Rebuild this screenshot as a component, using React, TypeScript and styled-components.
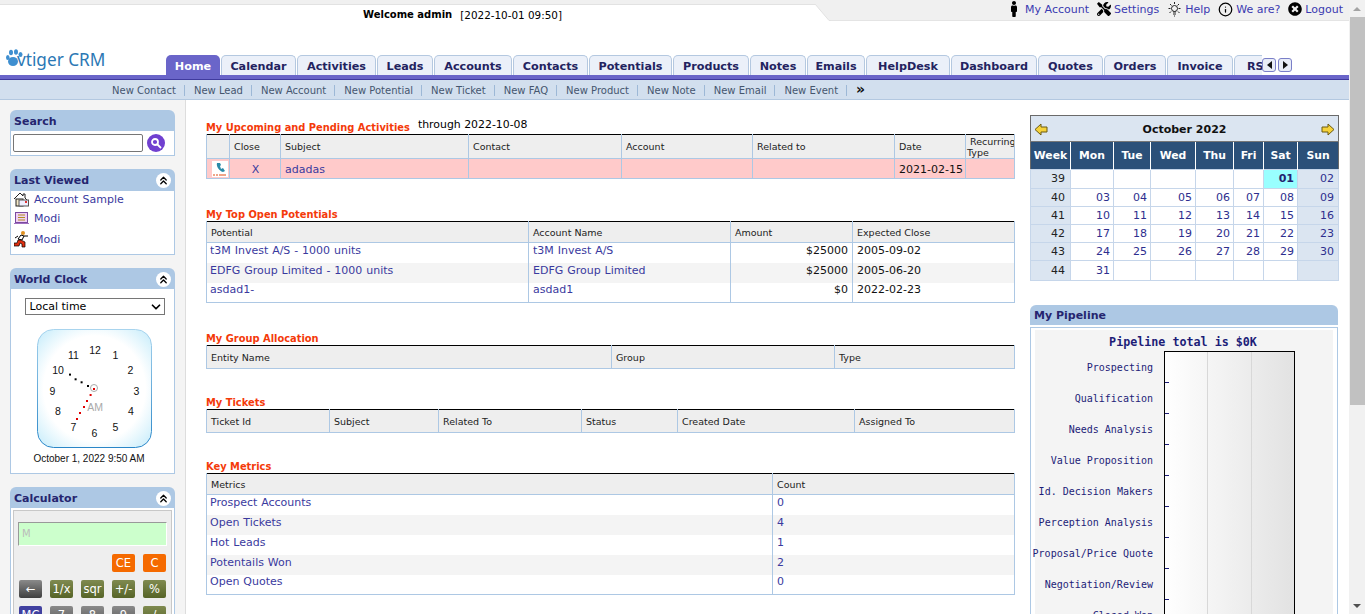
import React from "react";
import styled, { createGlobalStyle } from "styled-components";
import { FaMale, FaTools, FaTimesCircle } from "react-icons/fa";
import { Info, ChevronsUp, ChevronDown } from "lucide-react";

const Global = createGlobalStyle`
  html, body { margin: 0; padding: 0; height: 614px; overflow: hidden; background: #fff; }
  body { font-family: "DejaVu Sans", Verdana, sans-serif; font-size: 11px; }
  a { color: #3a3a9e; text-decoration: none; }
`;

const Shell = styled.div`display: flex; width: 1365px; height: 614px; overflow: hidden;`;
const Page = styled.div`width: 1349px; height: 614px; display: flex; flex-direction: column; overflow: hidden;`;
const Scrollbar = styled.div`width: 16px; height: 614px; background: #f1f1f1; display: flex; flex-direction: column; align-items: center; justify-content: space-between;`;
const ScrollEnd = styled.div`height: 17px; width: 16px; display: flex; align-items: center; justify-content: center; flex: none;`;
const ScrollThumb = styled.div`width: 15px; margin-left: 1px; height: 388px; background: #c1c1c1; flex: none;`;
const ScrollRest = styled.div`flex: 1;`;
const ScrollArrow = styled.div<{ $up?: boolean }>`
  width: 0; height: 0; border-left: 4px solid transparent; border-right: 4px solid transparent;
  ${(p) => (p.$up ? "border-bottom: 4px solid #a3a3a3;" : "border-top: 4px solid #505050;")}
`;

const TopStrip = styled.div`display: flex; height: 21px; flex: none;`;
const TopLeft = styled.div`
  width: 815px; height: 21px; border-top: 4px solid #f0f0f0; box-shadow: inset 0 1px 0 #e2e2e2; box-sizing: border-box;
  padding: 5px 0 0 363px; display: flex; gap: 8px; white-space: nowrap; font-size: 10px; line-height: 12px; color: #000;
`;
const WelcomeName = styled.b`font-weight: 700;`;
const WelcomeDate = styled.span`font-size: 10.4px;`;
const Notch = styled.svg`width: 16px; height: 21px; flex: none; display: block;`;
const TopRight = styled.div`
  flex: 1; background: #f0f0f0; border-bottom: 1px solid #e4e4e4; display: flex; justify-content: flex-end; align-items: center;
  padding: 0 6px 2px 0; gap: 8px; font-size: 11px; box-sizing: border-box;
`;
const TopLink = styled.a`display: flex; align-items: center; gap: 3px; color: #3a3ab0; white-space: nowrap;`;

const LogoRow = styled.div`height: 54px; display: flex; align-items: flex-end; flex: none;`;
const Logo = styled.div`width: 166px; height: 54px; display: flex; align-items: flex-start; padding: 28px 0 0 6px; box-sizing: border-box; flex: none;`;
const LogoText = styled.span`font-family: "Noto Sans", "Liberation Sans", sans-serif; font-size: 17.2px; line-height: 22px; color: #2b78b5; margin-left: -7px;`;
const Tabs = styled.div`display: flex; width: 1096px; overflow: hidden; gap: 1px; align-items: flex-end; flex: none;`;
const Tab = styled.div<{ $w: number; $active?: boolean }>`
  width: ${(p) => p.$w}px; height: 20px; box-sizing: border-box; flex: none; border-radius: 5px 5px 0 0;
  text-align: center; font-weight: 700; font-size: 11.2px; line-height: 23px; white-space: nowrap; overflow: hidden;
  ${(p) => (p.$active
    ? "background:#6a65c9;color:#fff;"
    : "background:#ebf0f9;color:#23235f;border:1px solid #b4c8e0;border-bottom:0;line-height:21px;")}
`;
const TabArrows = styled.div`display: flex; gap: 2px; height: 20px; align-items: center;`;
const TabArrow = styled.div`
  width: 14px; height: 14px; box-sizing: border-box; border: 1px solid #7a7fc8; border-radius: 3px; background: #e8ecf7;
  display: flex; align-items: center; justify-content: center;
`;
const TriLeft = styled.div`width: 0; height: 0; border-top: 4px solid transparent; border-bottom: 4px solid transparent; border-right: 5px solid #111;`;
const TriRight = styled.div`width: 0; height: 0; border-top: 4px solid transparent; border-bottom: 4px solid transparent; border-left: 5px solid #111;`;

const PurpleBar = styled.div`height: 5px; background: #6a65c9; border-bottom: 1px solid #3f3a9e; box-sizing: border-box; flex: none;`;
const SubNav = styled.div`
  height: 20px; background: #d2dfee; border-bottom: 1px solid #b3c8e0; box-sizing: border-box; flex: none;
  display: flex; align-items: center; padding: 2px 0 0 112px; font-size: 10px; color: #45566e; white-space: nowrap;
`;
const SubLink = styled.span`padding-right: 8px; margin-right: 9px; border-right: 1px solid #9db8d6; line-height: 11px;`;
const More = styled.span`font-weight: 700; color: #111; font-size: 14px; line-height: 14px; margin-top: -3px;`;

const Body = styled.div`flex: 1; display: flex; min-height: 0;`;
const Sidebar = styled.aside`
  width: 186px; box-sizing: border-box; background: #f4f4f4; border-right: 1px solid #ddd; padding: 10px 10px 0;
  display: flex; flex-direction: column; gap: 13px; flex: none; overflow: hidden;
`;
const Card = styled.section`width: 165px; flex: none;`;
const CardHead = styled.div<{ $h?: number }>`
  height: ${(p) => p.$h ?? 21}px; box-sizing: border-box; background: #adc8e4; border-radius: 6px 6px 0 0; display: flex; align-items: center; justify-content: space-between;
  padding: ${(p) => (p.$h ? 0 : 2)}px 4px 0; font-weight: 700; font-size: 11px; color: #25256f;
`;
const Collapse = styled.div`width: 15px; height: 15px; border-radius: 50%; background: #fff; display: flex; align-items: center; justify-content: center; color: #000;`;
const CardBody = styled.div`background: #fff; border: 1px solid #adc8e4; border-top: 0; box-sizing: border-box;`;
const SearchBody = styled(CardBody)`height: 25px; display: flex; align-items: center; padding: 0 0 0 2px; gap: 4px;`;
const SearchInput = styled.div`width: 130px; height: 18px; box-sizing: border-box; border: 1px solid #767676; border-radius: 2px; background: #fff;`;
const SearchBtn = styled.div`width: 18px; height: 18px; border-radius: 50%; background: #7040d0; display: flex; align-items: center; justify-content: center;`;
const RecentBody = styled(CardBody)`height: 64px;`;
const RecentRow = styled.div<{ $h: number }>`height: ${(p) => p.$h}px; display: flex; align-items: center; gap: 5px; padding-left: 3px; font-size: 11px; word-spacing: 0.6px;`;
const ClockBody = styled(CardBody)`height: 185px; display: flex; flex-direction: column; align-items: center;`;
const ZoneSelect = styled.div`
  width: 140px; height: 17px; margin: 9px 0 0 4px; box-sizing: border-box; border: 1px solid #767676; display: flex; align-items: center; justify-content: space-between;
  padding: 0 1px 0 4px; font-size: 11px; color: #000; flex: none;
`;
const ClockFace = styled.svg`width: 116px; height: 120px; display: block; margin: 14px 0 0 4px; flex: none;`;
const ClockDate = styled.div`font-family: "Liberation Sans", Arial, sans-serif; font-size: 10px; color: #111; margin: 4px 7px 0 0; white-space: nowrap;`;

const CalcBody = styled(CardBody)`padding: 2px; height: 130px;`;
const CalcInner = styled.div`background: #eeeeee; border: 1px solid #c8c8c8; padding: 11px 4px 0 4px; height: 140px; box-sizing: border-box;`;
const CalcDisplay = styled.div`height: 24px; background: #ccffcc; border-top: 1px solid #999; border-left: 1px solid #999; border-right: 1px solid #fff; border-bottom: 1px solid #fff; box-sizing: border-box; color: #bbb; font-size: 10px; line-height: 22px; padding-left: 3px;`;
const CalcRow = styled.div`display: grid; grid-template-columns: repeat(5, 23px); column-gap: 8px; margin-top: 8px; padding-left: 1px;`;
const CalcKey = styled.div<{ $k: string }>`
  height: 18px; border-radius: 2px; color: #fff; font-size: 11.5px; line-height: 18px; text-align: center; overflow: hidden; white-space: nowrap;
  background: ${(p) => ({ o: "#f56a00", g: "linear-gradient(#7f8a50,#566427)", d: "linear-gradient(#8a8a8a,#3f3f3f)", b: "#40409f", n: "linear-gradient(#8a8a8a,#5a5a5a)" } as Record<string, string>)[p.$k]};
`;
const CalcBlank = styled.div``;

const Main = styled.main`width: 829px; box-sizing: border-box; padding: 21px 0 0 20px; flex: none;`;
const Section = styled.section<{ $gap: number }>`width: 809px; margin-bottom: ${(p) => p.$gap}px;`;
const TitleRow = styled.div`display: flex; align-items: flex-end; gap: 8px; height: 13px;`;
const Title = styled.h3`margin: 0; font-size: 9.9px; line-height: 13px; font-weight: 700; color: #f43a0a; white-space: nowrap;`;
const Through = styled.span`font-size: 10.9px; line-height: 16px; color: #000; position: relative; top: -1px;`;
const Table = styled.table`border-collapse: collapse; table-layout: fixed; width: 808px; border-top: 1px solid #000; box-sizing: border-box;`;
const Col = styled.col<{ $w: number }>`width: ${(p) => p.$w}px;`;
const Th = styled.th<{ $h?: number; $tight?: boolean }>`
  height: ${(p) => p.$h ?? 21}px; background: #eeeeee; border: 1px solid #adc8e4; border-top: 0; font-weight: 400; font-size: 9.5px; color: #222;
  text-align: left; padding: ${(p) => (p.$tight ? "0 0 0 1px" : "0 4px")}; box-sizing: border-box; line-height: 11px; overflow: hidden;
`;
const Td = styled.td<{ $bg?: string; $right?: boolean; $center?: boolean; $h?: number; $flat?: boolean }>`
  height: ${(p) => p.$h ?? 20}px; box-sizing: border-box; border-left: 1px solid #adc8e4; border-right: 1px solid #adc8e4;
  padding: ${(p) => (p.$flat ? "1px 3px 0 4px" : p.$right ? "0 4px 5px 4px" : "0 3px 5px 4px")}; font-size: 11px; line-height: 13px; word-spacing: 0.4px;
  background: ${(p) => p.$bg ?? "transparent"}; color: #111; white-space: nowrap; overflow: hidden;
  text-align: ${(p) => (p.$right ? "right" : p.$center ? "center" : "left")};
  &:first-child { padding-left: 3px; }
`;
const LastRow = styled.tr`border-bottom: 1px solid #adc8e4;`;
const Row = styled.tr``;
const PhoneCell = styled(Td)`padding: 0; line-height: 0;`;

const Right = styled.aside`width: 308px; margin-left: 15px; flex: none; padding-top: 15px; box-sizing: border-box;`;
const CalTable = styled.table`border-collapse: collapse; table-layout: fixed; width: 308px; border: 1px solid #6a6a6a; box-sizing: border-box;`;
const CalTitle = styled.td`height: 26px; box-sizing: border-box; background: #dbe5f1; border-bottom: 1px solid #777; padding: 1px 3px 0;`;
const CalTitleInner = styled.div`display: flex; align-items: center; justify-content: space-between; font-weight: 700; font-size: 11px; color: #111;`;
const CalHead = styled.th`height: 28px; box-sizing: border-box; background: #2b5079; color: #fff; font-size: 10.8px; font-weight: 700; border-left: 1px solid #fff; padding: 0; text-align: center; &:first-child { border-left: 0; }`;
const CalCell = styled.td<{ $k?: string; $h: number }>`
  height: ${(p) => p.$h}px; box-sizing: border-box; border: 1px solid #c6d6ea; padding: 0 3px 0 0; text-align: right; font-size: 11px; line-height: 12px; color: #2e2e8e;
  ${(p) => p.$k === "week" ? "background:#dbe5f1;color:#222;padding-right:5px;" : ""}
  ${(p) => p.$k === "sun" ? "background:#dbe5f1;padding-right:4px;" : ""}
  ${(p) => p.$k === "today" ? "background:#99ffff;font-weight:700;color:#23236f;" : ""}
`;
const PipeHead = styled(CardHead)`height: 20px; margin-top: 24px; padding: 0 4px;`;
const PipeBody = styled.div`margin-top: 2px; border: 1px solid #adc8e4; padding: 2px 4px 0; height: 300px; box-sizing: border-box; overflow: hidden;`;
const PipeChart = styled.svg`display: block; width: 298px; height: 300px; background: #f4f4f4; overflow: visible;`;
const Label = styled.text`font-family: "DejaVu Sans Mono", monospace; font-size: 10px; fill: #1d1d78;`;
const ChartTitle = styled.text`font-family: "DejaVu Sans Mono", monospace; font-size: 11.7px; font-weight: 700; fill: #1d1d78;`;
const ClockNum = styled.text`font-family: "Liberation Sans", Arial, sans-serif; font-size: 10.5px; fill: #111; text-anchor: middle;`;
const ClockAm = styled.text`font-family: "Liberation Sans", Arial, sans-serif; font-size: 10.5px; fill: #aaa; text-anchor: middle;`;

const Paw = () => (
  <svg width="18" height="18" viewBox="0 0 18 18">
    <g fill="#3f8fd0">
      <ellipse cx="7" cy="12.500" rx="5" ry="4.500" />
      <ellipse cx="1.800" cy="8.500" rx="1.800" ry="2.600" />
      <ellipse cx="5" cy="3.500" rx="2" ry="2.800" />
      <ellipse cx="10" cy="3" rx="2" ry="2.800" />
      <ellipse cx="14.500" cy="5.500" rx="2" ry="2.500" />
    </g>
  </svg>
);

const Bulb = () => (
  <svg width="15" height="15" viewBox="0 0 15 15" fill="none" stroke="#222" strokeWidth="1">
    <circle cx="7.5" cy="6.5" r="3" />
    <path d="M6 10h3M6 12h3M7 14h1M7.5 0v2M1.5 6.5h2M11.5 6.5h2M3 2l1.5 1.5M12 2l-1.500 1.500M2.500 11l1.500-1.500M12.500 11L11 9.500" />
  </svg>
);

const Collapser = () => (
  <Collapse><ChevronsUp size={13} strokeWidth={2.4} /></Collapse>
);

const HouseIcon = () => (
  <svg width="15" height="15" viewBox="0 0 15 15">
    <path d="M0 7L6 1l3 3V2h2v4l2 2" fill="none" stroke="#222" />
    <rect x="2" y="7" width="7" height="7" fill="#f4e8c8" stroke="#222" />
    <rect x="5" y="8" width="9.500" height="6" fill="#eef" stroke="#555" />
    <rect x="11" y="9" width="2" height="2" fill="#d33" />
  </svg>
);
const NoteIcon = () => (
  <svg width="15" height="14" viewBox="0 0 15 14">
    <rect x="1.500" y="1.500" width="12" height="10" fill="#f0d0f4" stroke="#7a4aa0" />
    <path d="M4 4h7M4 6.500h7M4 9h7" stroke="#b09020" />
    <path d="M0 12.500h15" stroke="#a070c0" />
  </svg>
);
const RunnerIcon = () => (
  <svg width="15" height="18" viewBox="0 0 15 18">
    <circle cx="9" cy="3" r="2" fill="#e09020" />
    <path d="M7 5L4 9l4 1 2-4z" fill="#fff" stroke="#000" />
    <path d="M10 6h4M4 6L1 8" stroke="#000" fill="none" />
    <path d="M4 10l-1 3H0v3h5l1-3 2 1v3h3v-5l-4-2z" fill="#e03010" stroke="#000" strokeWidth=".7" />
  </svg>
);
const PhoneIcon = () => (
  <svg width="16" height="16" viewBox="0 0 16 16">
    <rect width="16" height="16" fill="#fff" />
    <path d="M5 2c-1 3 2 8 6 9l2-1-2-3-2 1-1-3 1-1-1-2z" fill="#2a8aa8" />
    <path d="M1 14h2M4 14h2M7 14h7" stroke="#e04a10" />
  </svg>
);
const CalArrow = ({ right }: { right?: boolean }) => (
  <svg width="14" height="13" viewBox="0 0 14 13">
    <path d={right ? "M1 4h6V1l6 5.500-6 5.500V9H1z" : "M13 4H7V1L1 6.500 7 12V9h6z"} fill="#f6d23a" stroke="#6a5a10" />
  </svg>
);

const tabs: [string, number][] = [
  ["Calendar", 75], ["Activities", 79], ["Leads", 56], ["Accounts", 78], ["Contacts", 75], ["Potentials", 83], ["Products", 76],
  ["Notes", 56], ["Emails", 58], ["HelpDesk", 84], ["Dashboard", 86], ["Quotes", 65], ["Orders", 62], ["Invoice", 66], ["RSS", 50],
];
const quick = ["New Contact", "New Lead", "New Account", "New Potential", "New Ticket", "New FAQ", "New Product", "New Note", "New Email", "New Event"];

const nums: [string, number, number][] = [
  ["12", 58, 21], ["1", 78.500, 26], ["2", 93.500, 41], ["3", 99.500, 62], ["4", 94, 82], ["5", 78.500, 98], ["6", 57.500, 104],
  ["7", 36.500, 98], ["8", 21, 82], ["9", 15.500, 62], ["10", 21, 41], ["11", 36.500, 26],
];
const blackDots = [[33, 45.600], [38.600, 50.300], [44.600, 53.300], [51, 57]];
const redDots = [[57, 60], [53.600, 66], [50, 72], [47, 78], [43, 84], [40, 90]];

const calWeeks: [string, string[], number][] = [
  ["39", ["", "", "", "", "", "01", "02"], 19],
  ["40", ["03", "04", "05", "06", "07", "08", "09"], 18],
  ["41", ["10", "11", "12", "13", "14", "15", "16"], 18],
  ["42", ["17", "18", "19", "20", "21", "22", "23"], 18],
  ["43", ["24", "25", "26", "27", "28", "29", "30"], 18],
  ["44", ["31", "", "", "", "", "", ""], 20],
];
const stages = ["Prospecting", "Qualification", "Needs Analysis", "Value Proposition", "Id. Decision Makers", "Perception Analysis", "Proposal/Price Quote", "Negotiation/Review", "Closed Won"];
const calcRows: [string, string][][] = [
  [["", "x"], ["", "x"], ["", "x"], ["CE", "o"], ["C", "o"]],
  [["←", "d"], ["1/x", "g"], ["sqr", "g"], ["+/-", "g"], ["%", "g"]],
  [["MC", "b"], ["7", "n"], ["8", "n"], ["9", "n"], ["/", "g"]],
];

export default function App() {
  return (
    <Shell>
      <Global />
      <Page>
        <TopStrip>
          <TopLeft><WelcomeName>Welcome admin</WelcomeName><WelcomeDate>[2022-10-01 09:50]</WelcomeDate></TopLeft>
          <Notch viewBox="0 0 16 21"><path d="M0 0h16v20.500H14L0 4z" fill="#f0f0f0" /><path d="M0 4L14 20.500H16" fill="none" stroke="#e2e2e2" /></Notch>
          <TopRight>
            <TopLink><FaMale size={16} color="#000" />My Account</TopLink>
            <TopLink><FaTools size={14} color="#000" />Settings</TopLink>
            <TopLink><Bulb />Help</TopLink>
            <TopLink><Info size={15} color="#000" />We are?</TopLink>
            <TopLink><FaTimesCircle size={14} color="#000" />Logout</TopLink>
          </TopRight>
        </TopStrip>
        <LogoRow>
          <Logo><Paw /><LogoText>vtiger CRM</LogoText></Logo>
          <Tabs>
            <Tab $w={54} $active>Home</Tab>
            {tabs.map(([t, w]) => <Tab key={t} $w={w}>{t}</Tab>)}
          </Tabs>
          <TabArrows>
            <TabArrow><TriLeft /></TabArrow>
            <TabArrow><TriRight /></TabArrow>
          </TabArrows>
        </LogoRow>
        <PurpleBar />
        <SubNav>
          {quick.map((q) => <SubLink key={q}>{q}</SubLink>)}
          <More>»</More>
        </SubNav>
        <Body>
          <Sidebar>
            <Card>
              <CardHead>Search</CardHead>
              <SearchBody>
                <SearchInput />
                <SearchBtn>
                  <svg width="12" height="12" viewBox="0 0 12 12" fill="none" stroke="#fff" strokeWidth="1.800"><circle cx="5" cy="5" r="3" /><path d="M7.500 7.500L11 11" /></svg>
                </SearchBtn>
              </SearchBody>
            </Card>
            <Card>
              <CardHead $h={22}>Last Viewed<Collapser /></CardHead>
              <RecentBody>
                <RecentRow $h={17}><HouseIcon /><a>Account Sample</a></RecentRow>
                <RecentRow $h={20}><NoteIcon /><a>Modi</a></RecentRow>
                <RecentRow $h={22}><RunnerIcon /><a>Modi</a></RecentRow>
              </RecentBody>
            </Card>
            <Card>
              <CardHead>World Clock<Collapser /></CardHead>
              <ClockBody>
                <ZoneSelect>Local time<ChevronDown size={14} strokeWidth={3} /></ZoneSelect>
                <ClockFace viewBox="0 0 116 120">
                  <defs>
                    <radialGradient id="glow" cx="50%" cy="50%" r="72%">
                      <stop offset="62%" stopColor="#ffffff" />
                      <stop offset="100%" stopColor="#bfeafa" />
                    </radialGradient>
                    <linearGradient id="edge" x1="0" y1="0" x2="0" y2="1">
                      <stop offset="0" stopColor="#a8d4ee" />
                      <stop offset="1" stopColor="#2a86c8" />
                    </linearGradient>
                  </defs>
                  <rect x=".5" y=".5" width="114" height="118" rx="16" fill="url(#glow)" stroke="url(#edge)" />
                  {nums.map(([n, x, y]) => <ClockNum key={n} x={x} y={y + 4}>{n}</ClockNum>)}
                  <ClockAm x={58} y={82}>AM</ClockAm>
                  <circle cx="57" cy="59" r="3.500" fill="none" stroke="#aaa" />
                  {blackDots.map(([x, y]) => <rect key={x} x={x - 1} y={y - 1} width="2" height="2" fill="#000" />)}
                  {redDots.map(([x, y]) => <rect key={x} x={x - 1} y={y - 1} width="2" height="2" fill="#e00000" />)}
                </ClockFace>
                <ClockDate>October 1, 2022 9:50 AM</ClockDate>
              </ClockBody>
            </Card>
            <Card>
              <CardHead>Calculator<Collapser /></CardHead>
              <CalcBody>
                <CalcInner>
                  <CalcDisplay>M</CalcDisplay>
                  {calcRows.map((r, i) => (
                    <CalcRow key={i}>
                      {r.map(([t, k], j) => k === "x" ? <CalcBlank key={j} /> : <CalcKey key={j} $k={k}>{t}</CalcKey>)}
                    </CalcRow>
                  ))}
                </CalcInner>
              </CalcBody>
            </Card>
          </Sidebar>
          <Main>
            <Section $gap={29}>
              <TitleRow><Title>My Upcoming and Pending Activities</Title><Through>through 2022-10-08</Through></TitleRow>
              <Table>
                <colgroup>{[23, 51, 188, 153, 131, 142, 71, 49].map((w, i) => <Col key={i} $w={w} />)}</colgroup>
                <thead><tr>
                  <Th $h={24} />
                  <Th $h={24}>Close</Th><Th $h={24}>Subject</Th><Th $h={24}>Contact</Th><Th $h={24}>Account</Th><Th $h={24}>Related to</Th><Th $h={24}>Date</Th>
                  <Th $h={24} $tight>&nbsp;Recurring Type</Th>
                </tr></thead>
                <tbody><LastRow>
                  <PhoneCell $bg="#ffcaca" $h={20} $center><PhoneIcon /></PhoneCell>
                  <Td $bg="#ffcaca" $h={20} $flat $center><a>X</a></Td>
                  <Td $bg="#ffcaca" $h={20} $flat><a>adadas</a></Td>
                  <Td $bg="#ffcaca" $h={20} /><Td $bg="#ffcaca" $h={20} /><Td $bg="#ffcaca" $h={20} />
                  <Td $bg="#ffcaca" $h={20} $flat>2021-02-15</Td>
                  <Td $bg="#ffcaca" $h={20} />
                </LastRow></tbody>
              </Table>
            </Section>
            <Section $gap={29}>
              <TitleRow><Title>My Top Open Potentials</Title></TitleRow>
              <Table>
                <colgroup>{[322, 202, 122, 162].map((w, i) => <Col key={i} $w={w} />)}</colgroup>
                <thead><tr><Th>Potential</Th><Th>Account Name</Th><Th>Amount</Th><Th>Expected Close</Th></tr></thead>
                <tbody>
                  <Row><Td><a>t3M Invest A/S - 1000 units</a></Td><Td><a>t3M Invest A/S</a></Td><Td $right>$25000</Td><Td>2005-09-02</Td></Row>
                  <Row><Td $bg="#f4f4f4"><a>EDFG Group Limited - 1000 units</a></Td><Td $bg="#f4f4f4"><a>EDFG Group Limited</a></Td><Td $bg="#f4f4f4" $right>$25000</Td><Td $bg="#f4f4f4">2005-06-20</Td></Row>
                  <LastRow><Td><a>asdad1-</a></Td><Td><a>asdad1</a></Td><Td $right>$0</Td><Td>2022-02-23</Td></LastRow>
                </tbody>
              </Table>
            </Section>
            <Section $gap={27}>
              <TitleRow><Title>My Group Allocation</Title></TitleRow>
              <Table>
                <colgroup>{[405, 223, 180].map((w, i) => <Col key={i} $w={w} />)}</colgroup>
                <thead><tr><Th $h={23}>Entity Name</Th><Th $h={23}>Group</Th><Th $h={23}>Type</Th></tr></thead>
              </Table>
            </Section>
            <Section $gap={27}>
              <TitleRow><Title>My Tickets</Title></TitleRow>
              <Table>
                <colgroup>{[123, 109, 143, 96, 177, 160].map((w, i) => <Col key={i} $w={w} />)}</colgroup>
                <thead><tr><Th $h={23}>Ticket Id</Th><Th $h={23}>Subject</Th><Th $h={23}>Related To</Th><Th $h={23}>Status</Th><Th $h={23}>Created Date</Th><Th $h={23}>Assigned To</Th></tr></thead>
              </Table>
            </Section>
            <Section $gap={0}>
              <TitleRow><Title>Key Metrics</Title></TitleRow>
              <Table>
                <colgroup>{[566, 242].map((w, i) => <Col key={i} $w={w} />)}</colgroup>
                <thead><tr><Th>Metrics</Th><Th>Count</Th></tr></thead>
                <tbody>
                  <Row><Td><a>Prospect Accounts</a></Td><Td><a>0</a></Td></Row>
                  <Row><Td $bg="#f4f4f4"><a>Open Tickets</a></Td><Td $bg="#f4f4f4"><a>4</a></Td></Row>
                  <Row><Td><a>Hot Leads</a></Td><Td><a>1</a></Td></Row>
                  <Row><Td $bg="#f4f4f4"><a>Potentails Won</a></Td><Td $bg="#f4f4f4"><a>2</a></Td></Row>
                  <LastRow><Td><a>Open Quotes</a></Td><Td><a>0</a></Td></LastRow>
                </tbody>
              </Table>
            </Section>
          </Main>
          <Right>
            <CalTable>
              <colgroup>{[40, 43, 37, 45, 38, 30, 34, 41].map((w, i) => <Col key={i} $w={w} />)}</colgroup>
              <thead>
                <tr><CalTitle colSpan={8}><CalTitleInner><CalArrow />October 2022<CalArrow right /></CalTitleInner></CalTitle></tr>
                <tr>{["Week", "Mon", "Tue", "Wed", "Thu", "Fri", "Sat", "Sun"].map((d) => <CalHead key={d}>{d}</CalHead>)}</tr>
              </thead>
              <tbody>
                {calWeeks.map(([w, days, h]) => (
                  <tr key={w}>
                    <CalCell $k="week" $h={h}>{w}</CalCell>
                    {days.map((d, i) => (
                      <CalCell key={i} $h={h} $k={d === "01" ? "today" : i === 6 ? "sun" : undefined}>{d}</CalCell>
                    ))}
                  </tr>
                ))}
              </tbody>
            </CalTable>
            <PipeHead>My Pipeline</PipeHead>
            <PipeBody>
              <PipeChart viewBox="0 0 298 300">
                <defs>
                  <linearGradient id="plot" x1="0" y1="0" x2="1" y2="0">
                    <stop offset="0" stopColor="#ffffff" />
                    <stop offset="1" stopColor="#e2e2e2" />
                  </linearGradient>
                </defs>
                <ChartTitle x={148} y={16} textAnchor="middle">Pipeline total is $0K</ChartTitle>
                <rect x={129.500} y={21.500} width={130} height={290} fill="url(#plot)" stroke="#000" />
                <path d="M172.500 22V300M216.500 22V300" stroke="#d8d8d8" />
                {stages.map((s, i) => (
                  <g key={s}>
                    <Label x={118} y={41 + i * 31} textAnchor="end">{s}</Label>
                    <path d={`M130 ${52.500 + i * 31}h4`} stroke="#1d1d78" />
                  </g>
                ))}
              </PipeChart>
            </PipeBody>
          </Right>
        </Body>
      </Page>
      <Scrollbar>
        <ScrollEnd><ScrollArrow $up /></ScrollEnd>
        <ScrollThumb />
        <ScrollRest />
        <ScrollEnd><ScrollArrow /></ScrollEnd>
      </Scrollbar>
    </Shell>
  );
}
